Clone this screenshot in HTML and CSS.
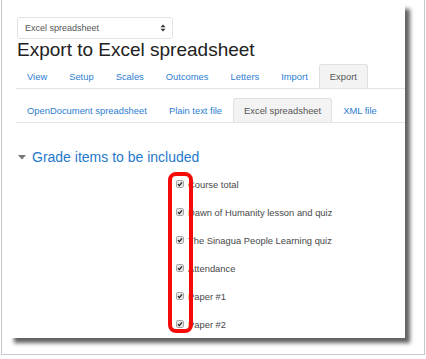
FILE: index.html
```html
<!DOCTYPE html>
<html>
<head>
<meta charset="utf-8">
<link rel="stylesheet" href="styles.css">
</head>
<body>
<div class="frame">
  <div class="panel">
    <div class="select">
      <span>Excel spreadsheet</span>
      <svg class="sel-arrow" width="6" height="8" viewBox="0 0 6 8"><path d="M3 0.5 L5.5 3.3 H0.5 Z M3 7.5 L5.5 4.7 H0.5 Z" fill="#333"/></svg>
    </div>
    <h2 class="title">Export to Excel spreadsheet</h2>
    <ul class="tabs">
      <li><a>View</a></li>
      <li><a>Setup</a></li>
      <li><a>Scales</a></li>
      <li><a>Outcomes</a></li>
      <li><a>Letters</a></li>
      <li><a>Import</a></li>
      <li class="active"><a>Export</a></li>
    </ul>
    <ul class="tabs tabs2">
      <li><a>OpenDocument spreadsheet</a></li>
      <li><a>Plain text file</a></li>
      <li class="active"><a>Excel spreadsheet</a></li>
      <li><a>XML file</a></li>
    </ul>
    <h3 class="section-title"><svg class="tri" width="8" height="5" viewBox="0 0 8 5"><path d="M0 0 H8 L4 4.5 Z" fill="#777"/></svg>Grade items to be included</h3>
    <div class="items">
      <div class="item"><svg class="cb" width="8" height="8" viewBox="0 0 8 8"><rect x="0.5" y="0.5" width="7" height="7" rx="1.2" fill="#e4e4e4" stroke="#a8a8a8"/><path d="M2 4.2 L3.4 5.6 L6 2.4" fill="none" stroke="#222" stroke-width="1.3"/></svg><span>Course total</span></div>
      <div class="item"><svg class="cb" width="8" height="8" viewBox="0 0 8 8"><rect x="0.5" y="0.5" width="7" height="7" rx="1.2" fill="#e4e4e4" stroke="#a8a8a8"/><path d="M2 4.2 L3.4 5.6 L6 2.4" fill="none" stroke="#222" stroke-width="1.3"/></svg><span>Dawn of Humanity lesson and quiz</span></div>
      <div class="item"><svg class="cb" width="8" height="8" viewBox="0 0 8 8"><rect x="0.5" y="0.5" width="7" height="7" rx="1.2" fill="#e4e4e4" stroke="#a8a8a8"/><path d="M2 4.2 L3.4 5.6 L6 2.4" fill="none" stroke="#222" stroke-width="1.3"/></svg><span>The Sinagua People Learning quiz</span></div>
      <div class="item"><svg class="cb" width="8" height="8" viewBox="0 0 8 8"><rect x="0.5" y="0.5" width="7" height="7" rx="1.2" fill="#e4e4e4" stroke="#a8a8a8"/><path d="M2 4.2 L3.4 5.6 L6 2.4" fill="none" stroke="#222" stroke-width="1.3"/></svg><span>Attendance</span></div>
      <div class="item"><svg class="cb" width="8" height="8" viewBox="0 0 8 8"><rect x="0.5" y="0.5" width="7" height="7" rx="1.2" fill="#e4e4e4" stroke="#a8a8a8"/><path d="M2 4.2 L3.4 5.6 L6 2.4" fill="none" stroke="#222" stroke-width="1.3"/></svg><span>Paper #1</span></div>
      <div class="item"><svg class="cb" width="8" height="8" viewBox="0 0 8 8"><rect x="0.5" y="0.5" width="7" height="7" rx="1.2" fill="#e4e4e4" stroke="#a8a8a8"/><path d="M2 4.2 L3.4 5.6 L6 2.4" fill="none" stroke="#222" stroke-width="1.3"/></svg><span>Paper #2</span></div>
      <div class="highlight"></div>
    </div>
  </div>
</div>
</body>
</html>
```
FILE: styles.css
```css
* { box-sizing: border-box; }
body {
  margin: 0;
  background: #fff;
  font-family: "Liberation Sans", Arial, sans-serif;
}
.frame {
  margin-left: 1px;
  width: 424px;
  height: 355px;
  border: 1px solid #c9c9c9;
  border-top: 0;
  padding: 4px 0 0 7px;
}
.panel {
  width: 396px;
  height: 334px;
  background: #fff;
  box-shadow: 5px 5px 4px rgba(0, 0, 0, 0.62);
  padding: 13px 0 0 8px;
}
.select {
  width: 156px;
  height: 22px;
  border: 1px solid #e2e2e2;
  border-radius: 3px;
  display: flex;
  align-items: center;
  justify-content: space-between;
  padding: 0 6px 0 7px;
  font-size: 9px;
  color: #555;
}
.title {
  margin: 0;
  font-size: 19px;
  line-height: 22px;
  font-weight: normal;
  color: #222;
}
.tabs {
  list-style: none;
  margin: 3px 0 0 -1px;
  padding: 0;
  width: 389px;
  display: flex;
  border-bottom: 1px solid #e3e3e3;
}
.tabs li {
  height: 24px;
  padding: 0 10px;
  border: 1px solid transparent;
  border-bottom: 0;
  border-radius: 3px 3px 0 0;
  display: flex;
  align-items: center;
  font-size: 9.4px;
  color: #2d7dd2;
}
.tabs li.active {
  background: #f3f3f3;
  border-color: #e0e0e0;
  color: #555;
}
.tabs2 {
  margin-top: 9px;
}
.section-title {
  margin: 26px 0 0 0;
  font-size: 14px;
  line-height: 17px;
  font-weight: normal;
  color: #1f78cd;
  display: flex;
  align-items: center;
}
.tri {
  margin: 0 6px 0 1px;
}
.items {
  position: relative;
  margin-top: 4px;
}
.item {
  height: 28px;
  display: flex;
  align-items: center;
  padding-left: 159px;
  font-size: 9.4px;
  color: #484848;
}
.cb {
  margin-right: 4px;
}
.highlight {
  position: absolute;
  left: 151px;
  top: 1.5px;
  width: 25px;
  height: 161px;
  border: 4px solid #f50a0a;
  border-radius: 8px;
}
```
